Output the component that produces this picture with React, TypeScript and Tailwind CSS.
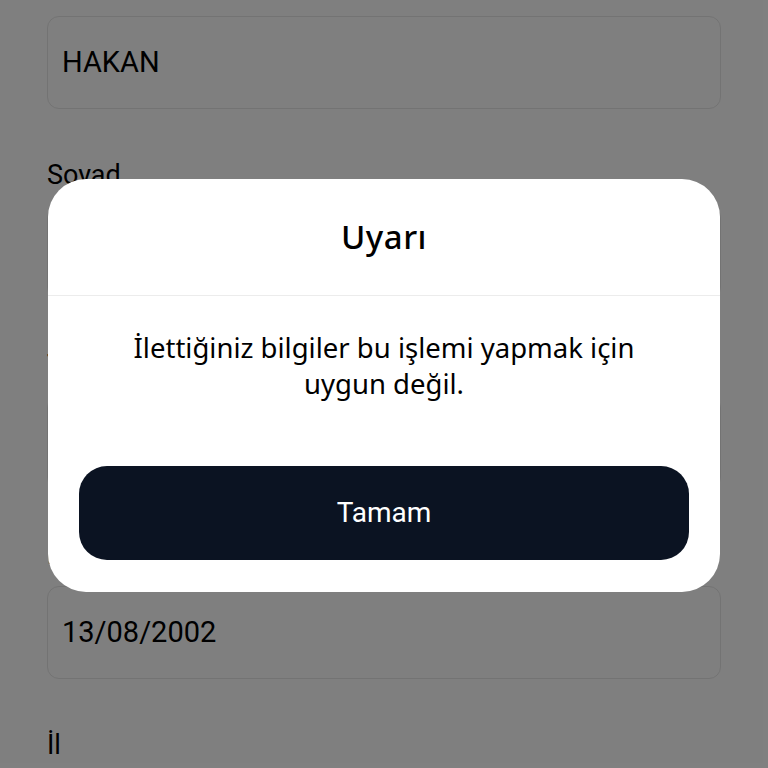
import React from "react";

type Field = { label: string; value: string };

const fields: Field[] = [
  { label: "Soyad", value: "YILMAZ" },
  { label: "T.C. Kimlik No", value: "12345678901" },
  { label: "Doğum Tarihi", value: "13/08/2002" },
  { label: "İl", value: "" },
];

function Input({ value }: { value: string }) {
  return (
    <div className="h-[93px] rounded-[12px] border border-[#e6e6e6] bg-white pl-[14px] flex items-center">
      <span className="text-[29px] text-black leading-none">{value}</span>
    </div>
  );
}

export default function App() {
  return (
    <div
      className="relative w-[768px] h-[768px] overflow-hidden bg-white"
      style={{ fontFamily: "Roboto, 'Noto Sans', sans-serif" }}
    >
      {/* form behind the dialog */}
      <div className="px-[47px] pt-[16px]">
        <Input value="HAKAN" />
        {fields.map((f) => (
          <div key={f.label}>
            <div className="mt-[50px] mb-[15px] h-[32px] leading-[32px] text-[27px] text-black">
              {f.label}
            </div>
            <Input value={f.value} />
          </div>
        ))}
      </div>

      {/* dim overlay */}
      <div className="absolute inset-0 bg-black/50" />

      {/* alert dialog */}
      <div className="absolute inset-0 pt-[2px] flex items-center justify-center">
        <div className="w-[672px] rounded-[38px] bg-white overflow-hidden">
          <div className="h-[117px] flex items-center justify-center border-b border-[#ececec]">
            <span
              className="text-[33px] font-medium text-black tracking-[0.5px]"
              style={{ fontFamily: "'Noto Sans', sans-serif" }}
            >
              Uyarı
            </span>
          </div>
          <div className="px-[31px] pt-[34px] pb-[32px]">
            <p
              className="text-center text-[27.5px] leading-[36px] text-black"
              style={{ fontFamily: "'Noto Sans', sans-serif" }}
            >
              İlettiğiniz bilgiler bu işlemi yapmak için
              <br />
              uygun değil.
            </p>
            <button className="mt-[64px] w-full h-[94px] rounded-[28px] bg-[#0b1322] text-white text-[28px]">
              Tamam
            </button>
          </div>
        </div>
      </div>
    </div>
  );
}
